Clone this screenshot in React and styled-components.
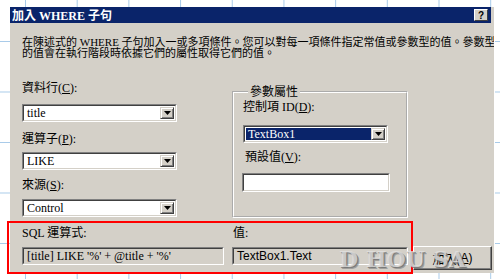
import React from 'react'
import styled, { createGlobalStyle } from 'styled-components'

const GlobalStyle = createGlobalStyle`
    html, body {
        margin: 0;
        padding: 0;
    }
    body {
        width: 500px;
        height: 279px;
        overflow: hidden;
        background-color: #fff;
        background-image:
            linear-gradient(to right, #a9cbe9 1px, transparent 1px),
            linear-gradient(to bottom, #a9cbe9 1px, transparent 1px);
        background-size: 51.7px 50.5px;
        background-position: 25px 41px;
        font-family: "Liberation Serif", "Noto Sans CJK TC", serif;
        font-size: 12px;
        color: #000;
    }
`

const Stage = styled.div`
    position: relative;
    padding: 7px 0 0 10px;
`

const Dialog = styled.div`
    width: 484px;
    height: 266px;
    background: #d4d0c8;
    border-right: 1px solid #fff;
    overflow: hidden;
`

const TitleBar = styled.div`
    height: 16px;
    margin-right: 3px;
    padding: 0 3px 0 2px;
    background: #0a246a;
    color: #fff;
    font-weight: bold;
    font-size: 12px;
    display: flex;
    align-items: center;
    justify-content: space-between;
`

const HelpButton = styled.div`
    width: 14px;
    height: 12px;
    box-sizing: border-box;
    background: #d4d0c8;
    border: 1px solid;
    border-color: #fff #404040 #404040 #fff;
    color: #000;
    font: bold 10px "Liberation Sans", sans-serif;
    display: flex;
    align-items: center;
    justify-content: center;
`

const Content = styled.div`
    padding: 14px 0 0 12px;
`

const Desc = styled.div`
    font-size: 11px;
    line-height: 11px;
    white-space: nowrap;
`

const Main = styled.div`
    display: flex;
    align-items: flex-start;
    margin-top: 22px;
`

const Column = styled.div`
    width: ${p => p.$w}px;
    margin-left: ${p => p.$ml || 0}px;
    display: flex;
    flex-direction: column;
`

const Label = styled.div`
    height: 14px;
    line-height: 14px;
    margin-top: ${p => p.$mt || 0}px;
    padding-left: ${p => p.$pl || 0}px;
    white-space: nowrap;
`

const Sunken = styled.div`
    box-sizing: border-box;
    width: ${p => p.$w}px;
    height: ${p => p.$h || 18}px;
    margin-top: ${p => p.$mt || 0}px;
    margin-left: ${p => p.$ml || 0}px;
    border: 1px solid;
    border-color: #808080 #fff #fff #808080;
    background: ${p => (p.$disabled ? '#d4d0c8' : '#fff')};
    display: flex;
`

const Inner = styled.div`
    flex: 1;
    display: flex;
    align-items: center;
    border: 1px solid;
    border-color: #404040 #d4d0c8 #d4d0c8 #404040;
    padding: 1px;
    min-width: 0;
`

const ValueText = styled.span`
    flex: 1;
    height: 100%;
    display: flex;
    align-items: center;
    padding-left: 2px;
    white-space: nowrap;
    font-family: ${p => (p.$sans ? '"Liberation Sans", "Noto Sans CJK TC", sans-serif' : 'inherit')};
    background: ${p => (p.$selected ? '#0a246a' : 'transparent')};
    color: ${p => (p.$selected ? '#fff' : '#000')};
`

const DropButton = styled.div`
    width: 14px;
    height: 100%;
    box-sizing: border-box;
    background: #d4d0c8;
    border: 1px solid;
    border-color: #d4d0c8 #404040 #404040 #d4d0c8;
    box-shadow: inset 1px 1px #fff, inset -1px -1px #808080;
    display: flex;
    align-items: center;
    justify-content: center;
`

const GroupBox = styled.fieldset`
    box-sizing: border-box;
    width: 176px;
    margin: 5px 0 0 55px;
    padding: 2px 10px 24px 9px;
    border: 2px groove #fff;
    min-width: 0;
`

const Legend = styled.legend`
    padding: 0 2px;
    margin-left: 5px;
    line-height: 12px;
`

const Bottom = styled.div`
    display: flex;
    align-items: flex-start;
    margin-top: 8px;
`

const PushButton = styled.div`
    box-sizing: border-box;
    width: 79px;
    height: 24px;
    margin: 20px 0 0 5px;
    border: 1px solid;
    border-color: #fff #404040 #404040 #fff;
    box-shadow: inset -1px -1px #808080;
    display: flex;
    align-items: center;
    justify-content: center;
    font-family: "Liberation Sans", "Noto Sans CJK TC", sans-serif;
`

const RedFrame = styled.div`
    position: absolute;
    left: 7px;
    top: 221px;
    width: 406px;
    height: 53px;
    box-sizing: border-box;
    border: 2px solid #f00;
    pointer-events: none;
`

const Watermark = styled.div`
    position: absolute;
    left: 339px;
    top: 246px;
    font: bold 22px "DejaVu Serif", serif;
    letter-spacing: 0;
    color: rgba(226, 226, 226, 0.75);
    text-shadow: 1px 1px 0 rgba(110, 110, 110, 0.75), 2px 2px 0 rgba(110, 110, 110, 0.5);
    white-space: pre;
    pointer-events: none;
`

const Arrow = () => (
    <svg width="7" height="4" viewBox="0 0 7 4">
        <path d="M0 0h7L3.5 4z" fill="#000" />
    </svg>
)

const Select = ({ value, w, mt, ml, selected }) => (
    <Sunken $w={w} $mt={mt} $ml={ml}>
        <Inner>
            <ValueText $selected={selected}>{value}</ValueText>
            <DropButton><Arrow /></DropButton>
        </Inner>
    </Sunken>
)

const Acc = ({ k }) => <u>{k}</u>

export default function App() {
    return (
        <>
            <GlobalStyle />
            <Stage>
                <Dialog>
                    <TitleBar>
                        <span>加入 WHERE 子句</span>
                        <HelpButton>?</HelpButton>
                    </TitleBar>
                    <Content>
                        <Desc>
                            <div>在陳述式的 WHERE 子句加入一或多項條件。您可以對每一項條件指定常值或參數型的值。參數型</div>
                            <div>的值會在執行階段時依據它們的屬性取得它們的值。</div>
                        </Desc>
                        <Main>
                            <Column $w={155}>
                                <Label>資料行(<Acc k="C" />):</Label>
                                <Select value="title" w={155} mt={9} />
                                <Label $mt={10}>運算子(<Acc k="P" />):</Label>
                                <Select value="LIKE" w={155} mt={6} />
                                <Label $mt={8}>來源(<Acc k="S" />):</Label>
                                <Select value="Control" w={155} mt={7} />
                            </Column>
                            <GroupBox>
                                <Legend>參數屬性</Legend>
                                <Label>控制項 ID(<Acc k="D" />):</Label>
                                <Select value="TextBox1" w={145} mt={11} selected />
                                <Label $mt={7} $pl={2}>預設值(<Acc k="V" />):</Label>
                                <Sunken $w={148} $h={19} $mt={9} $ml={-1}>
                                    <Inner />
                                </Sunken>
                            </GroupBox>
                        </Main>
                        <Bottom>
                            <Column $w={202}>
                                <Label>SQL 運算式:</Label>
                                <Sunken $w={202} $mt={7} $disabled>
                                    <Inner>
                                        <ValueText>[title] LIKE '%' + @title + '%'</ValueText>
                                    </Inner>
                                </Sunken>
                            </Column>
                            <Column $w={176} $ml={8}>
                                <Label $pl={1}>值:</Label>
                                <Sunken $w={176} $mt={7} $disabled>
                                    <Inner>
                                        <ValueText $sans>TextBox1.Text</ValueText>
                                    </Inner>
                                </Sunken>
                            </Column>
                            <PushButton>加入(<Acc k="A" />)</PushButton>
                        </Bottom>
                    </Content>
                </Dialog>
                <RedFrame />
                <Watermark>D HOU SA</Watermark>
            </Stage>
        </>
    )
}
